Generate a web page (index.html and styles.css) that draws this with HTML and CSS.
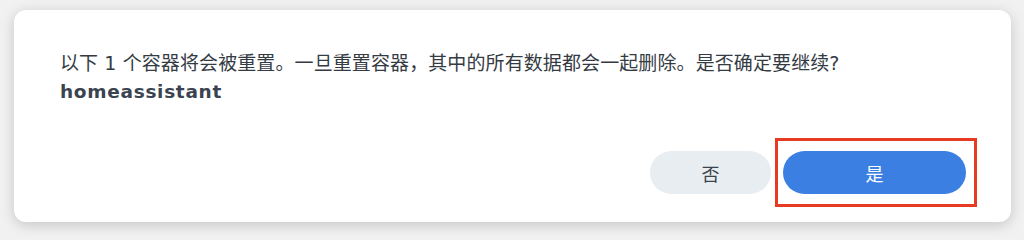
FILE: index.html
```html
<!DOCTYPE html>
<html lang="zh-CN">
<head>
<meta charset="utf-8">
<title>重置容器</title>
<link rel="stylesheet" href="styles.css">
</head>
<body>
  <div class="dialog">
    <div class="message">
      <p class="line">以下 1 个容器将会被重置。一旦重置容器，其中的所有数据都会一起删除。是否确定要继续?</p>
      <p class="name">homeassistant</p>
    </div>
    <div class="actions">
      <button class="btn btn-no" type="button">否</button>
      <div class="highlight-wrap">
        <button class="btn btn-yes" type="button">是</button>
        <span class="highlight"></span>
      </div>
    </div>
  </div>
</body>
</html>
```

FILE: styles.css
```css
html, body {
  margin: 0;
  padding: 0;
}

body {
  width: 1024px;
  height: 240px;
  background: #f1f1f1;
  box-sizing: border-box;
  padding: 10px 13px 0 14px;
  font-family: "DejaVu Sans", "Noto Sans CJK SC", sans-serif;
}

.dialog {
  box-sizing: border-box;
  width: 997px;
  height: 212px;
  background: #ffffff;
  border-radius: 12px;
  box-shadow: 0 3px 14px rgba(0, 0, 0, 0.18);
  padding: 39px 45px 0 46px;
  display: flex;
  flex-direction: column;
}

.message p {
  margin: 0;
}

.line {
  font-size: 19px;
  line-height: 28px;
  letter-spacing: 0.1px;
  color: #353b43;
}

.name {
  font-size: 18.5px;
  line-height: 29px;
  font-weight: bold;
  letter-spacing: 0.7px;
  color: #3a4350;
}

.actions {
  display: flex;
  justify-content: flex-end;
  align-items: center;
  gap: 12px;
  margin-top: 45px;
}

.btn {
  border: none;
  height: 43px;
  border-radius: 22px;
  font-family: "Noto Sans CJK SC", sans-serif;
  font-size: 18px;
  padding: 0;
  cursor: pointer;
}

.btn-no {
  width: 121px;
  background: #e8edf2;
  color: #3c434b;
}

.btn-yes {
  width: 183px;
  background: #3b7fe3;
  color: #ffffff;
}

.highlight-wrap {
  position: relative;
  display: flex;
}

.highlight {
  position: absolute;
  left: -8px;
  right: -11px;
  top: -13px;
  bottom: -13px;
  border: 3px solid #e63a22;
  pointer-events: none;
}
```
